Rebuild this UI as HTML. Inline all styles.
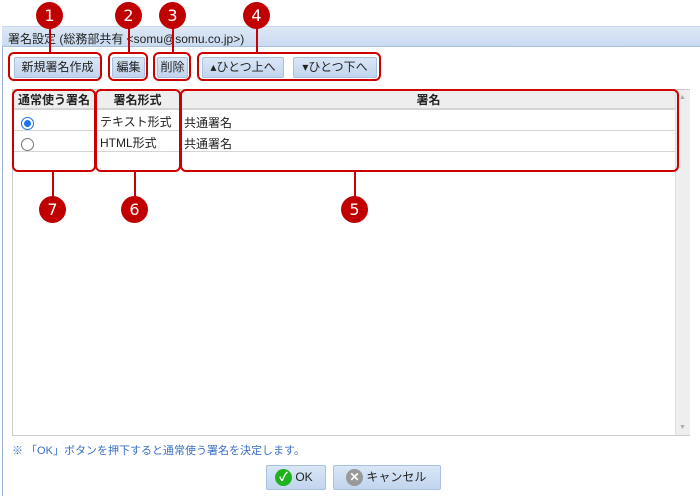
<!DOCTYPE html>
<html><head><meta charset="utf-8"><style>
*{box-sizing:border-box;margin:0;padding:0}
body{width:700px;height:496px;background:#fff;position:relative;overflow:hidden;font-family:"Liberation Sans","Noto Sans CJK JP",sans-serif;font-size:12px;color:#222}
.a{position:absolute}
.win{left:2px;top:26px;width:698px;height:470px;border-left:1px solid #9bb5d8}
.title{left:2px;top:26px;width:698px;height:21px;background:linear-gradient(#dde8f5,#c9daf0);border-bottom:1px solid #a8c0df;border-top:1px solid #c8d8ee;padding:3px 6px;font-size:12px;color:#222}
.btn{height:21px;background:linear-gradient(#d9e6f6,#c2d5ee);border:1px solid #a9c0df;border-radius:2px;font-size:12px;line-height:19px;text-align:center;color:#222}
.rb{border:2px solid #cc0000;border-radius:6px}
.c{width:27px;height:27px;border-radius:50%;background:#c00000;color:#fff;font:16px/27px "DejaVu Sans",sans-serif;text-align:center}
.l{width:2px;background:#cc0000}
.grid{left:12px;top:89px;width:678px;height:347px;border:1px solid #ccc}
.hd{top:90px;height:20px;background:#eee;border-bottom:2px solid #d4d4d4;font-weight:bold;text-align:center;line-height:20px}
.row{height:1px;background:#d4d4d4}
</style></head><body>
<div class="a win"></div>
<div class="a title">署名設定 (総務部共有 &lt;somu@somu.co.jp&gt;)</div>

<div class="a btn" style="left:14px;top:57px;width:87px">新規署名作成</div>
<div class="a btn" style="left:112px;top:57px;width:33px">編集</div>
<div class="a btn" style="left:157px;top:57px;width:31px">削除</div>
<div class="a btn" style="left:202px;top:57px;width:82px">▴ひとつ上へ</div>
<div class="a btn" style="left:293px;top:57px;width:84px">▾ひとつ下へ</div>

<div class="a grid"></div>
<div class="a hd" style="left:13px;width:663px"></div>
<div class="a" style="left:13px;top:90px;width:82px;font-weight:bold;text-align:center;line-height:20px">通常使う署名</div>
<div class="a" style="left:95px;top:90px;width:85px;font-weight:bold;text-align:center;line-height:20px">署名形式</div>
<div class="a" style="left:181px;top:90px;width:495px;font-weight:bold;text-align:center;line-height:20px">署名</div>
<div class="a" style="left:95px;top:90px;width:1px;height:61px;background:#ddd"></div>
<div class="a" style="left:180px;top:90px;width:1px;height:61px;background:#ddd"></div>
<div class="a row" style="left:13px;top:130px;width:663px"></div>
<div class="a row" style="left:13px;top:151px;width:663px"></div>
<div class="a" style="left:21px;top:117px;width:13px;height:13px;border-radius:50%;border:1px solid #1a73e8;background:#fff"><div style="margin:2px;width:7px;height:7px;border-radius:50%;background:#1a73e8"></div></div>
<div class="a" style="left:21px;top:138px;width:13px;height:13px;border-radius:50%;border:1px solid #777;background:#fff"></div>
<div class="a" style="left:100px;top:113px">テキスト形式</div>
<div class="a" style="left:100px;top:134px">HTML形式</div>
<div class="a" style="left:184px;top:114px">共通署名</div>
<div class="a" style="left:184px;top:135px">共通署名</div>
<div class="a" style="left:675px;top:90px;width:15px;height:345px;background:#eee;border-left:1px solid #ddd"></div>
<div class="a" style="left:679px;top:94px;font-size:7px;color:#aaa">▲</div>
<div class="a" style="left:679px;top:424px;font-size:7px;color:#aaa">▼</div>

<div class="a" style="left:12px;top:442px;color:#3a6fc4;font-size:11px">※ 「OK」ボタンを押下すると通常使う署名を決定します。</div>
<div class="a btn" style="left:266px;top:465px;width:60px;height:25px;text-align:left;padding-left:8px;line-height:23px">
<span style="display:inline-block;width:17px;height:17px;border-radius:50%;background:#1db31d;color:#fff;font-size:12px;line-height:17px;text-align:center;vertical-align:middle;font-weight:bold">✓</span> OK</div>
<div class="a btn" style="left:333px;top:465px;width:108px;height:25px;text-align:left;padding-left:12px;line-height:23px">
<span style="display:inline-block;width:17px;height:17px;border-radius:50%;background:#999;color:#fff;font-size:12px;line-height:17px;text-align:center;vertical-align:middle;font-weight:bold">✕</span> キャンセル</div>

<div class="a rb" style="left:8px;top:52px;width:94px;height:29px"></div>
<div class="a rb" style="left:108px;top:52px;width:40px;height:29px"></div>
<div class="a rb" style="left:153px;top:52px;width:38px;height:29px"></div>
<div class="a rb" style="left:197px;top:52px;width:184px;height:29px"></div>
<div class="a rb" style="left:12px;top:89px;width:84px;height:83px"></div>
<div class="a rb" style="left:95px;top:89px;width:86px;height:83px"></div>
<div class="a rb" style="left:180px;top:89px;width:499px;height:83px"></div>

<div class="a l" style="left:49px;top:26px;height:27px"></div>
<div class="a l" style="left:128px;top:26px;height:27px"></div>
<div class="a l" style="left:172px;top:26px;height:27px"></div>
<div class="a l" style="left:256px;top:26px;height:27px"></div>
<div class="a c" style="left:36px;top:2px">1</div>
<div class="a c" style="left:115px;top:2px">2</div>
<div class="a c" style="left:159px;top:2px">3</div>
<div class="a c" style="left:243px;top:2px">4</div>

<div class="a l" style="left:52px;top:171px;height:26px"></div>
<div class="a l" style="left:134px;top:171px;height:26px"></div>
<div class="a l" style="left:354px;top:171px;height:26px"></div>
<div class="a c" style="left:39px;top:196px">7</div>
<div class="a c" style="left:121px;top:196px">6</div>
<div class="a c" style="left:341px;top:196px">5</div>
</body></html>
